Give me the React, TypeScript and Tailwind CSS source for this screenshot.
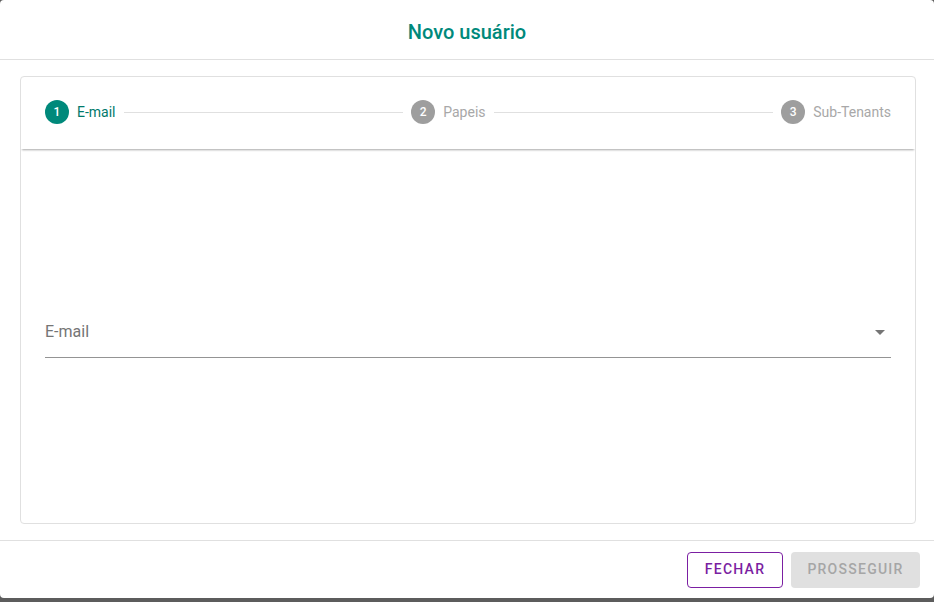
import React from "react";

function Step({ n, label, active }: { n: number; label: string; active?: boolean }) {
  return (
    <div className="flex items-center shrink-0">
      <div
        className={
          "w-6 h-6 rounded-full flex items-center justify-center text-[12px] font-medium text-white " +
          (active ? "bg-[#00897b]" : "bg-[#9e9e9e]")
        }
      >
        {n}
      </div>
      <span
        className={
          "ml-2 text-[14px] " + (active ? "text-[#00796b]" : "text-[#a8a8a8]")
        }
      >
        {label}
      </span>
    </div>
  );
}

export default function App() {
  return (
    <div
      className="h-[602px] w-[934px] bg-[#5c5c5c] overflow-hidden"
      style={{ fontFamily: "Roboto, 'Noto Sans', sans-serif" }}
    >
      <div className="h-[598px] w-full bg-white rounded-[4px] flex flex-col">
        <div className="h-[60px] shrink-0 flex items-center justify-center border-b border-[#e0e0e0]">
          <h1 className="text-[20px] font-medium text-[#00897b] mt-[5px]">Novo usuário</h1>
        </div>
        <div className="pl-5 pr-[18px] pt-4 pb-4 flex-1 flex flex-col min-h-0">
          <div className="flex-1 border border-[#e0e0e0] rounded-[4px] flex flex-col overflow-hidden">
            <div className="h-[72px] pb-[2px] shrink-0 flex items-center px-6 shadow-[0_2px_2px_-1px_rgba(0,0,0,0.35)] relative z-10">
              <Step n={1} label="E-mail" active />
              <div className="flex-1 h-px bg-[#e0e0e0] mx-2" />
              <Step n={2} label="Papeis" />
              <div className="flex-1 h-px bg-[#e0e0e0] mx-2" />
              <Step n={3} label="Sub-Tenants" />
            </div>
            <div className="flex-1 px-6 flex flex-col">
              <div className="mt-[169px] flex items-center justify-between h-[40px] border-b border-[#949494]">
                <span className="text-[16px] text-[#757575] mb-[12px]">E-mail</span>
                <svg width="10" height="5" viewBox="0 0 10 5" className="mr-[6px] mb-[10px]">
                  <path d="M0 0 L10 0 L5 5 Z" fill="#757575" />
                </svg>
              </div>
            </div>
          </div>
        </div>
        <div className="h-[58px] shrink-0 border-t border-[#e0e0e0] flex items-center justify-end gap-2 pr-[14px]">
          <button className="h-9 w-[96px] rounded-[4px] border border-[#7b1fa2] text-[#7b1fa2] text-[14px] font-medium tracking-[1.25px]">
            FECHAR
          </button>
          <button className="h-9 w-[129px] rounded-[4px] bg-[#e0e0e0] text-[#a6a6a6] text-[14px] font-medium tracking-[1.25px]">
            PROSSEGUIR
          </button>
        </div>
      </div>
    </div>
  );
}
